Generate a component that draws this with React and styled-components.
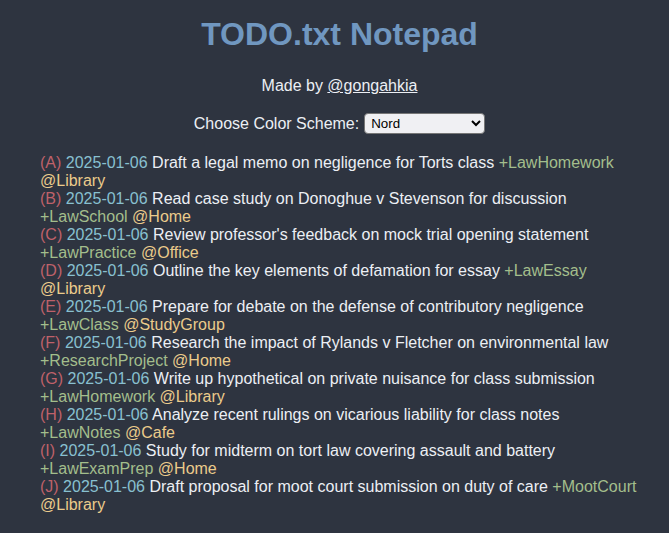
import { createGlobalStyle, styled } from "styled-components";

const nord = {
  bg: "#2e3440",
  title: "#7097c0",
  text: "#eceff4",
  priority: "#bf616a",
  date: "#88c0d0",
  project: "#a3be8c",
  context: "#ebcb8b",
};

const todos = [
  "(A) 2025-01-06 Draft a legal memo on negligence for Torts class +LawHomework @Library",
  "(B) 2025-01-06 Read case study on Donoghue v Stevenson for discussion +LawSchool @Home",
  "(C) 2025-01-06 Review professor's feedback on mock trial opening statement +LawPractice @Office",
  "(D) 2025-01-06 Outline the key elements of defamation for essay +LawEssay @Library",
  "(E) 2025-01-06 Prepare for debate on the defense of contributory negligence +LawClass @StudyGroup",
  "(F) 2025-01-06 Research the impact of Rylands v Fletcher on environmental law +ResearchProject @Home",
  "(G) 2025-01-06 Write up hypothetical on private nuisance for class submission +LawHomework @Library",
  "(H) 2025-01-06 Analyze recent rulings on vicarious liability for class notes +LawNotes @Cafe",
  "(I) 2025-01-06 Study for midterm on tort law covering assault and battery +LawExamPrep @Home",
  "(J) 2025-01-06 Draft proposal for moot court submission on duty of care +MootCourt @Library",
];

const GlobalStyle = createGlobalStyle`
  html, body {
    margin: 0;
    background: ${nord.bg};
  }
  body {
    font-family: "Liberation Sans", Arial, sans-serif;
    color: ${nord.text};
  }
`;

const Page = styled.main`
  min-height: 533px;
  padding: 16px 30px 0 40px;
  box-sizing: border-box;
`;

const Title = styled.h1`
  margin: 0 0 24px;
  text-align: center;
  font-size: 32px;
  line-height: 37px;
  color: ${nord.title};
`;

const Credit = styled.p`
  margin: 0 0 18px;
  text-align: center;
  font-size: 16px;
  line-height: 18px;

  a {
    color: ${nord.text};
  }
`;

const SchemeRow = styled.div`
  display: flex;
  justify-content: center;
  align-items: center;
  gap: 5px;
  margin: 0 0 20px;
  font-size: 16px;
  height: 21px;
`;

const Select = styled.select`
  width: 121px;
  height: 21px;
  font-family: "Liberation Sans", Arial, sans-serif;
  font-size: 13.33px;
  border-radius: 4px;
  border: 1px solid #767676;
  background: #f0f0f3;
  color: #000;
  padding: 0 2px;
`;

const List = styled.div`
  font-size: 16px;
  line-height: 18px;
`;

const Item = styled.div`
  color: ${nord.text};
`;

const Token = styled.span`
  color: ${(p) => p.$color};
`;

function tokenColor(word, i) {
  if (i === 0 && /^\([A-Z]\)$/.test(word)) return nord.priority;
  if (/^\d{4}-\d{2}-\d{2}$/.test(word)) return nord.date;
  if (word.startsWith("+")) return nord.project;
  if (word.startsWith("@")) return nord.context;
  return nord.text;
}

function TodoLine({ line }) {
  const words = line.split(" ");
  return (
    <Item>
      {words.map((w, i) => (
        <span key={i}>
          <Token $color={tokenColor(w, i)}>{w}</Token>
          {i < words.length - 1 ? " " : ""}
        </span>
      ))}
    </Item>
  );
}

export default function App() {
  return (
    <>
      <GlobalStyle />
      <Page>
        <Title>TODO.txt Notepad</Title>
        <Credit>
          Made by <a href="#">@gongahkia</a>
        </Credit>
        <SchemeRow>
          <label htmlFor="scheme">Choose Color Scheme:</label>
          <Select id="scheme" defaultValue="nord">
            <option value="nord">Nord</option>
            <option value="dracula">Dracula</option>
            <option value="solarized">Solarized</option>
          </Select>
        </SchemeRow>
        <List>
          {todos.map((t) => (
            <TodoLine key={t} line={t} />
          ))}
        </List>
      </Page>
    </>
  );
}
